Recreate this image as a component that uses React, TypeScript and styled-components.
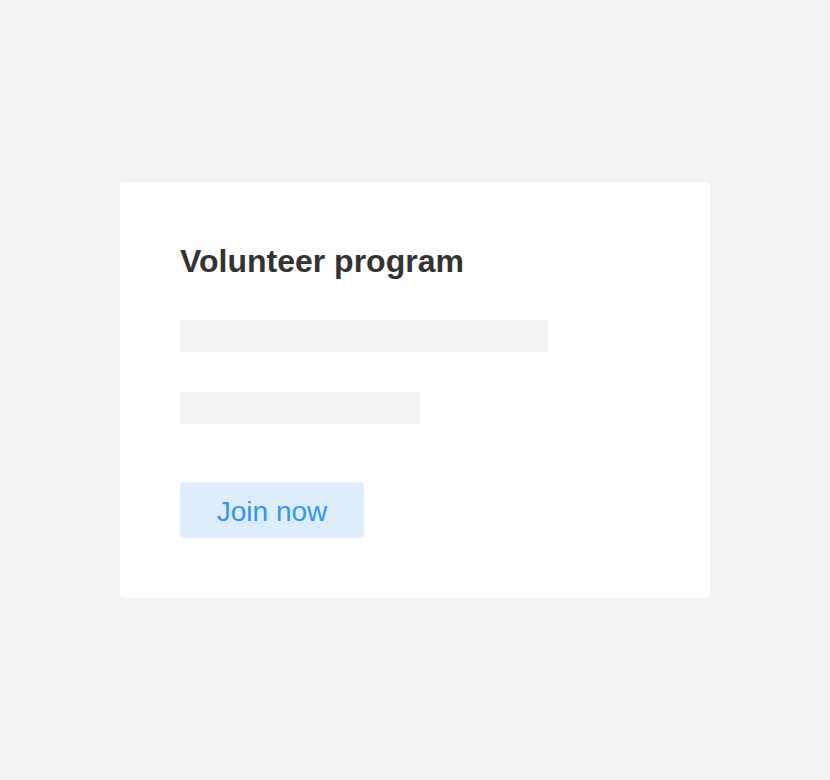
import React from 'react';
import styled, { createGlobalStyle } from 'styled-components';

const GlobalStyle = createGlobalStyle`
  html, body {
    margin: 0;
    padding: 0;
    background: #f2f2f2;
  }
  body {
    font-family: "Liberation Sans", Arial, Helvetica, sans-serif;
  }
`;

const Page = styled.div`
  display: flex;
  align-items: center;
  justify-content: center;
  width: 100%;
  height: 780px;
`;

const Card = styled.section`
  box-sizing: border-box;
  width: 590px;
  height: 416px;
  padding: 60px;
  background: #ffffff;
  border-radius: 4px;
  display: flex;
  flex-direction: column;
  align-items: flex-start;
`;

const Title = styled.h2`
  margin: 1px 0 40px;
  font-size: 32px;
  font-weight: 700;
  line-height: normal;
  color: #333333;
`;

const Placeholder = styled.div<{ $width: number; $gap: number }>`
  width: ${(p) => p.$width}px;
  height: 32px;
  margin-bottom: ${(p) => p.$gap}px;
  background: #f2f2f2;
  border-radius: 4px;
`;

const JoinButton = styled.button`
  box-sizing: border-box;
  width: 184px;
  height: 56px;
  padding: 4px 0 0;
  border: none;
  border-radius: 4px;
  background: #ddedfd;
  color: #3196f0;
  font-family: inherit;
  font-size: 28px;
  cursor: pointer;
`;

const App = () => {
    return (
        <>
            <GlobalStyle />
            <Page>
                <Card>
                    <Title>Volunteer program</Title>
                    <Placeholder $width={368} $gap={40} />
                    <Placeholder $width={240} $gap={58} />
                    <JoinButton>Join now</JoinButton>
                </Card>
            </Page>
        </>
    );
};

export default App;
